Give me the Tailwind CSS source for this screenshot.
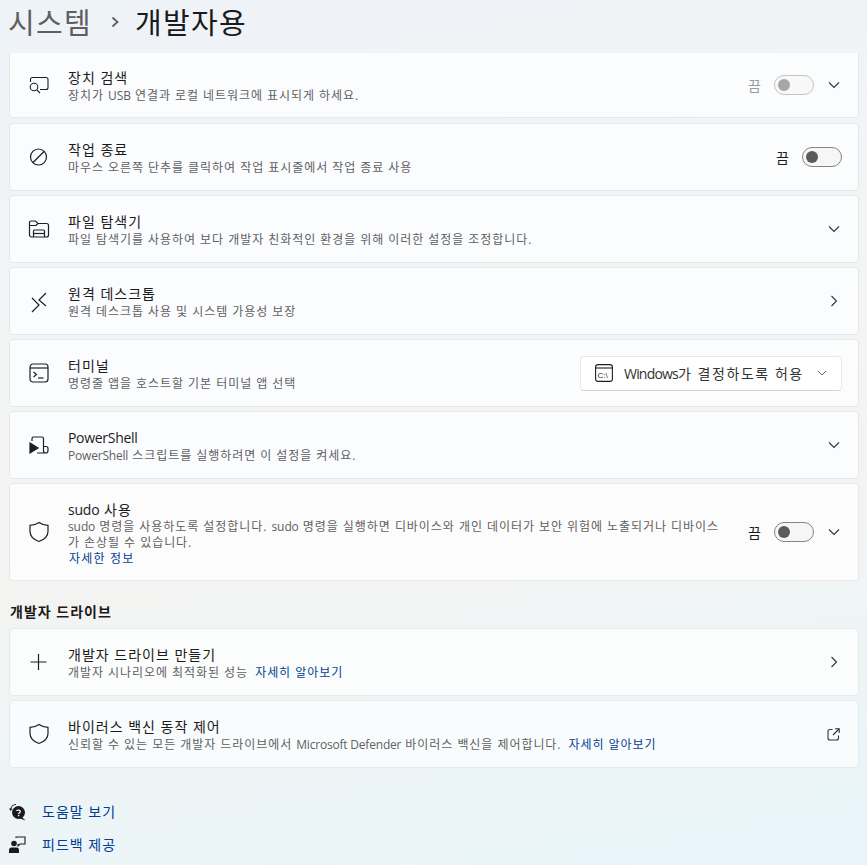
<!DOCTYPE html>
<html lang="ko">
  <head>
    <meta charset="UTF-8" />
    <meta name="viewport" content="width=device-width, initial-scale=1.0" />
    <script src="https://cdn.jsdelivr.net/npm/@tailwindcss/browser@4"></script>
    <title>시스템 > 개발자용</title>
  </head>
  <body class="w-[867px] h-[865px] overflow-hidden bg-[linear-gradient(170deg,#eef3f8_0%,#f3f4f4_35%,#f3f4f2_60%,#e8f5fb_100%)] text-[#1b1b1b] font-['Open_Sans','Noto_Sans_CJK_KR',sans-serif]">
    <header class="h-[53px] flex items-start pl-[8px] text-[29px] leading-[43px] tracking-[1.3px] font-['Noto_Sans_CJK_KR',sans-serif]">
      <span class="text-[#5f5f5f]">시스템</span>
      <svg class="ml-[18px] mr-[15px] mt-[16px]" width="10" height="12" viewBox="0 0 10 12" fill="none" stroke="#5f5f5f" stroke-width="1.8"><path d="M2.5 1.5 7.5 6 2.5 10.5" /></svg>
      <span>개발자용</span>
    </header>

    <main class="flex flex-col gap-[4px] pl-[9px] w-[859px]">
      <!-- 장치 검색 -->
      <section class="h-[65px] mb-[1px] flex items-center bg-[#fbfcfe] border-b border-x border-[#e6e8ea] rounded-b-[4px]">
        <div class="w-[58px] flex justify-center">
          <svg width="22" height="20" viewBox="0 0 22 20" fill="none" stroke="#1f1f1f" stroke-width="1.1"><path d="M2.5 7V4.5C2.5 3.4 3.4 2.5 4.5 2.5H18C19.1 2.5 20 3.4 20 4.5V12.5C20 13.6 19.1 14.5 18 14.5H12" /><circle cx="6" cy="12" r="3.8" /><path d="M8.8 14.8 12 18" /></svg>
        </div>
        <div class="flex-1 min-w-0 pt-[1px]">
          <div class="text-[14px] leading-[19px] tracking-[1px]">장치 검색</div>
          <div class="text-[12px] leading-[17px] tracking-[.95px] text-[#5f5f5f]">장치가 <span class="tracking-[-.1px]">USB</span> 연결과 로컬 네트워크에 표시되게 하세요.</div>
        </div>
        <span class="text-[14px] text-[#9a9a9a] mr-[13px]">끔</span>
        <div class="w-[40px] h-[20px] rounded-full border border-[#c4c4c4] flex items-center pl-[3px] bg-[#f8f8f8]"><div class="w-[12px] h-[12px] rounded-full bg-[#a6a6a6]"></div></div>
        <svg class="ml-[14px] mr-[18px]" width="12" height="8" viewBox="0 0 12 8" fill="none" stroke="#333" stroke-width="1.1"><path d="M1 1.5 6 6.5 11 1.5" /></svg>
      </section>

      <!-- 작업 종료 -->
      <section class="h-[68px] flex items-center bg-[#fbfcfe] border border-[#e6e8ea] rounded-[4px]">
        <div class="w-[58px] flex justify-center">
          <svg width="20" height="20" viewBox="0 0 20 20" fill="none" stroke="#1f1f1f" stroke-width="1.2"><circle cx="9.5" cy="10" r="8" /><path d="M4 15.5 15 4.5" /></svg>
        </div>
        <div class="flex-1 min-w-0 pt-[1px]">
          <div class="text-[14px] leading-[19px] tracking-[1px]">작업 종료</div>
          <div class="text-[12px] leading-[17px] tracking-[.95px] text-[#5f5f5f]">마우스 오른쪽 단추를 클릭하여 작업 표시줄에서 작업 종료 사용</div>
        </div>
        <span class="text-[14px] mr-[13px]">끔</span>
        <div class="w-[40px] h-[20px] rounded-full border border-[#858585] flex items-center pl-[3px] bg-[#f6f6f6] mr-[16px]"><div class="w-[12px] h-[12px] rounded-full bg-[#5b5b5b]"></div></div>
      </section>

      <!-- 파일 탐색기 -->
      <section class="h-[68px] flex items-center bg-[#fbfcfe] border border-[#e6e8ea] rounded-[4px]">
        <div class="w-[58px] flex justify-center">
          <svg width="22" height="20" viewBox="0 0 22 20" fill="none" stroke="#1f1f1f" stroke-width="1.2"><path d="M1.5 16V3.5C1.5 2.6 2.2 2 3 2H7.5L10 4.5H18.5C19.6 4.5 20.5 5.4 20.5 6.5V16C20.5 17.1 19.6 18 18.5 18H3.5C2.4 18 1.5 17.1 1.5 16Z" /><path d="M1.5 6.5H8L10 4.5" /><path d="M5.5 18V12C5.5 11.4 5.9 11 6.5 11H15.5C16.1 11 16.5 11.4 16.5 12V18" /><path d="M5.5 14.5H16.5" /></svg>
        </div>
        <div class="flex-1 min-w-0 pt-[1px]">
          <div class="text-[14px] leading-[19px] tracking-[1px]">파일 탐색기</div>
          <div class="text-[12px] leading-[17px] tracking-[.95px] text-[#5f5f5f]">파일 탐색기를 사용하여 보다 개발자 친화적인 환경을 위해 이러한 설정을 조정합니다.</div>
        </div>
        <svg class="mx-[18px]" width="12" height="8" viewBox="0 0 12 8" fill="none" stroke="#333" stroke-width="1.1"><path d="M1 1.5 6 6.5 11 1.5" /></svg>
      </section>

      <!-- 원격 데스크톱 -->
      <section class="h-[68px] flex items-center bg-[#fbfcfe] border border-[#e6e8ea] rounded-[4px]">
        <div class="w-[58px] flex justify-center">
          <svg width="20" height="24" viewBox="0 0 20 24" fill="none" stroke="#1f1f1f" stroke-width="1.2"><path d="M3 9 10 16 3 23" /><path d="M17 4 10 11 17 17" /></svg>
        </div>
        <div class="flex-1 min-w-0 pt-[2px]">
          <div class="text-[14px] leading-[19px] tracking-[1px]">원격 데스크톱</div>
          <div class="text-[12px] leading-[17px] tracking-[.95px] text-[#5f5f5f]">원격 데스크톱 사용 및 시스템 가용성 보장</div>
        </div>
        <svg class="mx-[20px]" width="8" height="12" viewBox="0 0 8 12" fill="none" stroke="#333" stroke-width="1.1"><path d="M1.5 1 6.5 6 1.5 11" /></svg>
      </section>

      <!-- 터미널 -->
      <section class="h-[68px] flex items-center bg-[#fbfcfe] border border-[#e6e8ea] rounded-[4px]">
        <div class="w-[58px] flex justify-center">
          <svg width="20" height="20" viewBox="0 0 20 20" fill="none" stroke="#1f1f1f" stroke-width="1.2"><rect x="1" y="1" width="18" height="18" rx="3" /><path d="M1 5H19" /><path d="M4.5 9 7.5 11.5 4.5 14" /><path d="M9 15H14.5" /></svg>
        </div>
        <div class="flex-1 min-w-0 pt-[2px]">
          <div class="text-[14px] leading-[19px] tracking-[1px]">터미널</div>
          <div class="text-[12px] leading-[17px] tracking-[.95px] text-[#5f5f5f]">명령줄 앱을 호스트할 기본 터미널 앱 선택</div>
        </div>
        <div class="w-[262px] h-[35px] mr-[16px] flex items-center bg-white border border-[#e8e8e8] border-b-[#d2d2d2] rounded-[4px]">
          <svg class="ml-[14px]" width="18" height="18" viewBox="0 0 18 18" fill="none" stroke="#1f1f1f" stroke-width="1.1"><rect x=".6" y=".6" width="16.8" height="16.8" rx="2.5" /><path d="M.6 4H17.4" /><text x="2.5" y="13.5" font-size="8" font-family="Liberation Sans" fill="#1f1f1f" stroke="none">C:\</text></svg>
          <span class="ml-[11px] text-[14px] tracking-[1.55px] text-[#333] whitespace-nowrap"><span class="tracking-[-.8px]">Windows</span>가 결정하도록 허용</span>
          <svg class="ml-auto mr-[14px]" width="10" height="6" viewBox="0 0 10 6" fill="none" stroke="#666" stroke-width="1"><path d="M1 1 5 5 9 1" /></svg>
        </div>
      </section>

      <!-- PowerShell -->
      <section class="h-[68px] flex items-center bg-[#fbfcfe] border border-[#e6e8ea] rounded-[4px]">
        <div class="w-[58px] flex justify-center">
          <svg width="20" height="20" viewBox="0 0 20 20" fill="none" stroke="#1f1f1f" stroke-width="1.2"><path d="M3 6V3.5C3 2.6 3.7 2 4.5 2H13C13.8 2 14.5 2.6 14.5 3.5V15.5C14.5 17 15.5 18 17 18H8" /><path d="M14.5 11.5H17C18.2 11.5 19 12.3 19 13.5V15.5C19 17 18 18 17 18" /><path d="M1 8 9 13 1 18Z" fill="#1f1f1f" /></svg>
        </div>
        <div class="flex-1 min-w-0 pt-[2px]">
          <div class="text-[14px] leading-[19px] tracking-[-.3px]">PowerShell</div>
          <div class="text-[12px] leading-[17px] tracking-[.95px] text-[#5f5f5f]"><span class="tracking-[-.2px]">PowerShell</span> 스크립트를 실행하려면 이 설정을 켜세요.</div>
        </div>
        <svg class="mx-[18px]" width="12" height="8" viewBox="0 0 12 8" fill="none" stroke="#333" stroke-width="1.1"><path d="M1 1.5 6 6.5 11 1.5" /></svg>
      </section>

      <!-- sudo -->
      <section class="h-[98px] flex items-center bg-[#fcfcfd] border border-[#e8e9e9] rounded-[4px]">
        <div class="w-[58px] flex justify-center">
          <svg width="20" height="22" viewBox="0 0 20 22" fill="none" stroke="#1f1f1f" stroke-width="1.2"><path d="M10 1.5C12.5 3.3 15.5 4.2 19 4.4V10.5C19 15 15.5 18.5 10 20.5 4.5 18.5 1 15 1 10.5V4.4C4.5 4.2 7.5 3.3 10 1.5Z" /></svg>
        </div>
        <div class="w-[670px] pt-[3px]">
          <div class="text-[14px] leading-[18px] tracking-[1px]"><span class="tracking-[-.2px]">sudo</span> 사용</div>
          <div class="text-[12px] leading-[16px] tracking-[.95px] text-[#5f5f5f]"><span class="tracking-[-.1px]">sudo</span> 명령을 사용하도록 설정합니다. <span class="tracking-[-.1px]">sudo</span> 명령을 실행하면 디바이스와 개인 데이터가 보안 위험에 노출되거나 디바이스<br />가 손상될 수 있습니다.</div>
          <div class="pl-[1px] text-[12px] leading-[16px] tracking-[1.2px] text-[#003e92]">자세한 정보</div>
        </div>
        <span class="ml-auto text-[14px] mr-[13px]">끔</span>
        <div class="w-[40px] h-[20px] rounded-full border border-[#858585] flex items-center pl-[3px] bg-[#f6f6f6]"><div class="w-[12px] h-[12px] rounded-full bg-[#5b5b5b]"></div></div>
        <svg class="ml-[14px] mr-[18px]" width="12" height="8" viewBox="0 0 12 8" fill="none" stroke="#333" stroke-width="1.1"><path d="M1 1.5 6 6.5 11 1.5" /></svg>
      </section>

      <h2 class="mt-[16px] mb-[1px] ml-[1px] text-[14px] leading-[22px] tracking-[1px] font-semibold">개발자 드라이브</h2>

      <!-- 개발자 드라이브 만들기 -->
      <section class="h-[68px] flex items-center bg-[#fbfcfc] border border-[#e8e9e9] rounded-[4px]">
        <div class="w-[58px] flex justify-center">
          <svg width="20" height="20" viewBox="0 0 20 20" fill="none" stroke="#1f1f1f" stroke-width="1.2"><path d="M9.5 2V18M1.5 10H17.5" /></svg>
        </div>
        <div class="flex-1 min-w-0 pt-[1px]">
          <div class="text-[14px] leading-[19px] tracking-[1px]">개발자 드라이브 만들기</div>
          <div class="text-[12px] leading-[17px] tracking-[.95px] text-[#5f5f5f]">개발자 시나리오에 최적화된 성능 <a class="ml-[3px] text-[#003e92]">자세히 알아보기</a></div>
        </div>
        <svg class="mx-[20px]" width="8" height="12" viewBox="0 0 8 12" fill="none" stroke="#333" stroke-width="1.1"><path d="M1.5 1 6.5 6 1.5 11" /></svg>
      </section>

      <!-- 바이러스 백신 -->
      <section class="h-[68px] flex items-center bg-[#f9fcfd] border border-[#e4ebee] rounded-[4px]">
        <div class="w-[58px] flex justify-center">
          <svg width="20" height="22" viewBox="0 0 20 22" fill="none" stroke="#1f1f1f" stroke-width="1.2"><path d="M10 1.5C12.5 3.3 15.5 4.2 19 4.4V10.5C19 15 15.5 18.5 10 20.5 4.5 18.5 1 15 1 10.5V4.4C4.5 4.2 7.5 3.3 10 1.5Z" /></svg>
        </div>
        <div class="flex-1 min-w-0 pt-[1px]">
          <div class="text-[14px] leading-[19px] tracking-[1px]">바이러스 백신 동작 제어</div>
          <div class="text-[12px] leading-[17px] tracking-[.95px] text-[#5f5f5f]">신뢰할 수 있는 모든 개발자 드라이브에서 <span class="tracking-[-.2px]">Microsoft Defender</span> 바이러스 백신을 제어합니다. <a class="ml-[3px] text-[#003e92]">자세히 알아보기</a></div>
        </div>
        <svg class="mx-[18px]" width="13" height="13" viewBox="0 0 13 13" fill="none" stroke="#333" stroke-width="1.1"><path d="M5.5 1.5H3C1.9 1.5 1 2.4 1 3.5V10C1 11.1 1.9 12 3 12H9.5C10.6 12 11.5 11.1 11.5 10V7.5" /><path d="M8 .8H12.2V5M12 1 6 7" /></svg>
      </section>
    </main>

    <footer class="mt-[32px] pl-[9px] flex flex-col gap-[9px]">
      <div class="flex items-center h-[24px] gap-[16px]">
        <svg width="17" height="18" viewBox="0 0 17 18" fill="#1b1b1b"><path d="M1.5 7C1.8 3.8 4.2 1.5 7 1.5" fill="none" stroke="#1b1b1b" stroke-width="1.1" /><path d="M0 5.5 1.7 8 3.6 5.8Z" /><circle cx="9.5" cy="9.5" r="6.5" /><path d="M13 14 16.5 17.5 11 15.5Z" /><path d="M7.7 8C7.8 6.8 11.3 6.8 11.3 8.6 11.3 9.8 9.6 9.8 9.6 11" fill="none" stroke="#fff" stroke-width="1.2" /><circle cx="9.6" cy="12.6" r=".8" fill="#fff" /></svg>
        <a class="text-[14px] leading-[20px] tracking-[1px] text-[#003e92]">도움말 보기</a>
      </div>
      <div class="flex items-center h-[24px] gap-[16px]">
        <svg width="17" height="18" viewBox="0 0 17 18" fill="#1b1b1b"><circle cx="5" cy="7.5" r="2.8" /><path d="M0 17V14C0 12.5 1 11.5 2.5 11.5H7.5C9 11.5 10 12.5 10 14V17Z" /><path d="M7 2V1H16V8H11L9 10V8" fill="none" stroke="#1b1b1b" stroke-width="1.1" /></svg>
        <a class="text-[14px] leading-[20px] tracking-[1px] text-[#003e92]">피드백 제공</a>
      </div>
    </footer>
  </body>
</html>
